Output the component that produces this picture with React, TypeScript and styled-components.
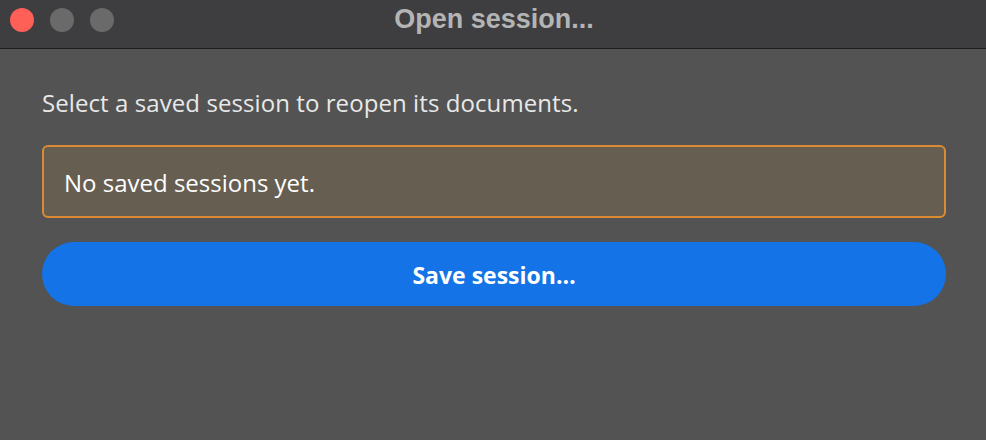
import styled, { createGlobalStyle } from "styled-components";

const GlobalStyle = createGlobalStyle`
  html, body {
    margin: 0;
    padding: 0;
    background: #535353;
  }
  * {
    box-sizing: border-box;
  }
`;

const Window = styled.div`
  width: 986px;
  height: 440px;
  background: #535353;
  display: flex;
  flex-direction: column;
  overflow: hidden;
`;

const TitleBar = styled.header`
  height: 49px;
  background: #3e3e40;
  border-bottom: 1px solid #1d1d1f;
  display: grid;
  grid-template-columns: 1fr auto 1fr;
  align-items: start;
  padding: 0 10px;
`;

const Lights = styled.div`
  height: 40px;
  display: flex;
  align-items: center;
  gap: 16px;
`;

const Light = styled.span<{ $color: string }>`
  width: 24px;
  height: 24px;
  border-radius: 50%;
  background: ${(p) => p.$color};
`;

const Title = styled.h1`
  margin: 0;
  height: 38px;
  display: flex;
  align-items: center;
  font-family: "Liberation Sans", Arial, sans-serif;
  font-weight: bold;
  font-size: 27px;
  line-height: 1;
  color: #b4b4b5;
  padding-left: 2px;
`;

const Body = styled.main`
  flex: 1;
  padding: 38px 40px 0 42px;
  display: flex;
  flex-direction: column;
  font-family: "Open Sans", sans-serif;
  font-size: 24px;
  line-height: 32px;
`;

const Prompt = styled.p`
  margin: 0 0 26px;
  color: #e8e8e8;
  letter-spacing: 0.08px;
`;

const EmptyNotice = styled.div`
  height: 73px;
  border: 2px solid #dd8a34;
  border-radius: 6px;
  background: #675e52;
  color: #ffffff;
  display: flex;
  align-items: center;
  padding: 2px 20px 0;
  margin-bottom: 24px;
`;

const PrimaryButton = styled.button`
  height: 64px;
  border: none;
  border-radius: 32px;
  background: #1473e6;
  color: #ffffff;
  font-family: "Open Sans", sans-serif;
  font-weight: bold;
  font-size: 23px;
  line-height: 32px;
  padding: 2px 0 0;
  cursor: pointer;
`;

export default function App() {
  return (
    <>
      <GlobalStyle />
      <Window>
        <TitleBar>
          <Lights>
            <Light $color="#fe5f57" />
            <Light $color="#6a6a6b" />
            <Light $color="#6a6a6b" />
          </Lights>
          <Title>Open session...</Title>
          <div />
        </TitleBar>
        <Body>
          <Prompt>Select a saved session to reopen its documents.</Prompt>
          <EmptyNotice>No saved sessions yet.</EmptyNotice>
          <PrimaryButton>Save session…</PrimaryButton>
        </Body>
      </Window>
    </>
  );
}
